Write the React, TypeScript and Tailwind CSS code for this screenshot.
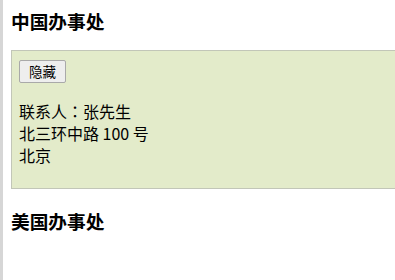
export default function App() {
  const cjk = { fontFamily: '"Microsoft YaHei", "Noto Sans CJK SC", "Liberation Sans", sans-serif' };

  return (
    <div className="flex h-[280px] w-[395px] overflow-hidden bg-white text-black" style={cjk}>
      <div className="w-[3px] shrink-0 bg-[#d6d6d6]" />
      <div className="flex-1 pl-[8px]">
        <h3 className="mt-[10px] text-[18.7px] font-bold leading-[22px]">中国办事处</h3>

        <div className="mt-[18px] w-[420px] border border-[#c2c6b8] bg-[#e3ebca] px-[7px] pt-[7px] pb-[22px]">
          <button
            type="button"
            className="h-[23px] w-[47px] rounded-[2px] border border-[#a9a9a9] bg-[#eeeeee] text-[13.5px] leading-[21px]"
          >
            隐藏
          </button>
          <p className="mt-[17px] text-[16px] leading-[22px]">
            联系人<span className="font-['Noto_Sans_CJK_TC',sans-serif]">：</span>张先生
            <br />
            北三环中路 100 号
            <br />
            北京
          </p>
        </div>

        <h3 className="mt-[21px] text-[18.7px] font-bold leading-[22px]">美国办事处</h3>
      </div>
    </div>
  );
}
